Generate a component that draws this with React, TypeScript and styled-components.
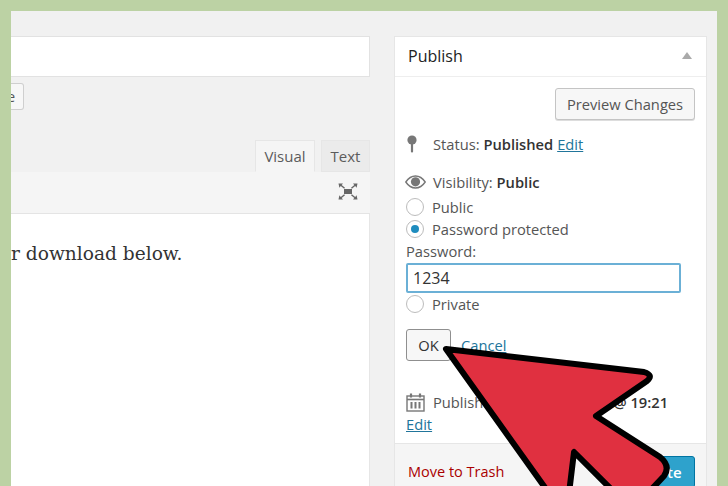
import styled, { createGlobalStyle } from 'styled-components';

const GlobalStyle = createGlobalStyle`
  html, body { margin: 0; padding: 0; overflow: hidden; }
  body { font-family: "Open Sans", "Liberation Sans", sans-serif; }
`;

const Frame = styled.div`
  position: relative;
  width: 728px;
  height: 486px;
  box-sizing: border-box;
  padding: 11px 11px 0;
  background: #bcd2a4;
  overflow: hidden;
`;

const Admin = styled.div`
  display: flex;
  gap: 24px;
  height: 475px;
  padding: 25px 10px 0 0;
  box-sizing: border-box;
  background: #f1f1f1;
  overflow: hidden;
`;

const Editor = styled.div`
  display: flex;
  flex-direction: column;
  width: 359px;
  flex: none;
  overflow: hidden;
`;

const TitleInput = styled.div`
  box-sizing: border-box;
  height: 41px;
  flex: none;
  background: #fff;
  border: 1px solid #e2e2e2;
  border-left: none;
`;

const SlugButton = styled.div`
  align-self: flex-start;
  box-sizing: border-box;
  width: 13px;
  height: 27px;
  margin-top: 6px;
  display: flex;
  align-items: center;
  justify-content: flex-end;
  overflow: hidden;
  padding-right: 8px;
  background: #f7f7f7;
  border: 1px solid #cfcfcf;
  border-left: none;
  border-radius: 0 3px 3px 0;
  font-size: 14px;
  color: #555;
`;

const Tabs = styled.div`
  display: flex;
  justify-content: flex-end;
  gap: 6px;
  margin-top: 30px;
  height: 32px;
  flex: none;
`;

const Tab = styled.div<{ $active?: boolean }>`
  box-sizing: border-box;
  display: flex;
  align-items: center;
  justify-content: center;
  width: ${(p) => (p.$active ? '60px' : '49px')};
  height: 32px;
  font-size: 15px;
  color: #5b5b5b;
  background: ${(p) => (p.$active ? '#f5f5f5' : '#ebebeb')};
  border: 1px solid #e6e6e6;
  border-bottom: ${(p) => (p.$active ? '1px solid #f5f5f5' : '1px solid #e6e6e6')};
`;

const Toolbar = styled.div`
  box-sizing: border-box;
  height: 42px;
  flex: none;
  display: flex;
  align-items: center;
  justify-content: flex-end;
  padding: 0 12px 2px 0;
  background: #f5f5f5;
  border-bottom: 1px solid #e4e4e4;
`;

const Content = styled.div`
  flex: 1;
  padding-top: 26px;
  background: #fff;
  border-right: 1px solid #e6e6e6;
`;

const BodyText = styled.p`
  margin: 0;
  font-family: "DejaVu Serif", serif;
  font-size: 18.6px;
  line-height: 28px;
  color: #333;
`;

const Box = styled.aside`
  width: 313px;
  flex: none;
  align-self: stretch;
  display: flex;
  flex-direction: column;
  background: #fff;
  border: 1px solid #e6e6e6;
  border-bottom: none;
  box-sizing: border-box;
`;

const BoxHeader = styled.div`
  box-sizing: border-box;
  height: 40px;
  flex: none;
  display: flex;
  align-items: center;
  justify-content: space-between;
  padding: 0 14px 2px 13px;
  border-bottom: 1px solid #eeeeee;
  font-size: 16px;
  font-weight: 500;
  color: #222;
`;

const Caret = styled.span`
  width: 0;
  height: 0;
  border-left: 5px solid transparent;
  border-right: 5px solid transparent;
  border-bottom: 7px solid #aaa;
`;

const BoxBody = styled.div`
  flex: 1;
  display: flex;
  flex-direction: column;
  padding: 0 11px;
  color: #555;
  font-size: 14.7px;
`;

const PreviewButton = styled.div`
  align-self: flex-end;
  box-sizing: border-box;
  width: 140px;
  height: 32px;
  margin-top: 11px;
  display: flex;
  align-items: center;
  justify-content: center;
  background: #f7f7f7;
  border: 1px solid #c4c4c4;
  border-radius: 3px;
  box-shadow: 0 1px 0 #ddd;
  color: #555;
`;

const InfoRow = styled.div<{ $top: number }>`
  display: flex;
  align-items: center;
  height: 22px;
  margin-top: ${(p) => p.$top}px;
  white-space: nowrap;
`;

const IconSlot = styled.span`
  width: 27px;
  flex: none;
  display: flex;
  align-items: center;
  justify-content: flex-start;
`;

const EyeSlot = styled(IconSlot)`
  margin-left: -1px;
  width: 28px;
`;

const Strong = styled.b`
  font-weight: 600;
  color: #333;
`;

const TextLink = styled.a`
  color: #21759b;
  text-decoration: underline;
`;

const LinkGap = styled(TextLink)`
  margin-left: 4px;
`;

const RadioRow = styled.div<{ $top?: number }>`
  display: flex;
  align-items: center;
  gap: 8px;
  height: 22px;
  margin-top: ${(p) => p.$top ?? 0}px;
  white-space: nowrap;
`;

const Radio = styled.span<{ $checked?: boolean }>`
  box-sizing: border-box;
  width: 18px;
  height: 18px;
  flex: none;
  border: 1px solid #bcbcbc;
  border-radius: 50%;
  background: #fff;
  display: flex;
  align-items: center;
  justify-content: center;
  &::after {
    content: '';
    width: 8px;
    height: 8px;
    border-radius: 50%;
    background: ${(p) => (p.$checked ? '#1e8cbe' : 'transparent')};
  }
`;

const PasswordLabel = styled.div`
  height: 22px;
  line-height: 22px;
`;

const PasswordInput = styled.div`
  box-sizing: border-box;
  width: 275px;
  height: 30px;
  margin-top: 1px;
  display: flex;
  align-items: center;
  padding-left: 5px;
  background: #fff;
  border: 2px solid #6bb0d6;
  border-radius: 2px;
  color: #333;
  font-size: 16px;
`;

const OkRow = styled.div`
  display: flex;
  align-items: center;
  gap: 10px;
  margin-top: 14px;
`;

const OkButton = styled.div`
  box-sizing: border-box;
  width: 45px;
  height: 32px;
  display: flex;
  align-items: center;
  justify-content: center;
  background: #f7f7f7;
  border: 1px solid #8f8f8f;
  border-radius: 3px;
  color: #333;
`;

const Footer = styled.div`
  box-sizing: border-box;
  flex: none;
  height: 44px;
  margin-top: 8px;
  display: flex;
  justify-content: space-between;
  align-items: flex-start;
  padding: 12px 11px 0 13px;
  background: #f5f5f5;
  border-top: 1px solid #e6e6e6;
`;

const TrashLink = styled.a`
  color: #a00;
  font-size: 14.5px;
  line-height: 32px;
`;

const UpdateButton = styled.div`
  box-sizing: border-box;
  width: 80px;
  height: 32px;
  display: flex;
  align-items: center;
  justify-content: center;
  background: #2ea2cc;
  border: 1px solid #0074a2;
  border-radius: 3px;
  color: #fff;
  font-size: 15px;
  font-weight: 600;
`;

const ArrowOverlay = styled.svg`
  position: absolute;
  left: 0;
  top: 0;
  pointer-events: none;
`;

function FullscreenIcon() {
  return (
    <svg width="20" height="17" viewBox="0 0 20 17" fill="#666">
      <rect x="6" y="6" width="8" height="5" />
      <path d="M0.5 0.5h4.5l-1.3 1.6 3.3 2.6-0.9 1-3.3-2.6-1.4 1.7zM19.5 0.5h-4.5l1.3 1.6-3.3 2.6 0.9 1 3.3-2.6 1.4 1.7zM0.5 16.5h4.5l-1.3-1.6 3.3-2.6-0.9-1-3.3 2.6-1.4-1.7zM19.5 16.5h-4.5l1.3-1.6-3.3-2.6 0.9-1 3.3 2.6 1.4-1.7z" />
    </svg>
  );
}

function PinIcon() {
  return (
    <svg width="12" height="18" viewBox="0 0 12 18" fill="#777">
      <circle cx="6" cy="5" r="4.6" />
      <rect x="4.9" y="8" width="2.2" height="9.6" rx="1" />
    </svg>
  );
}

function EyeIcon() {
  return (
    <svg width="21" height="14" viewBox="0 0 21 14">
      <path d="M0.8 7C3.5 3 6.8 1 10.5 1s7 2 9.7 6c-2.7 4-6 6-9.7 6S3.500 11 .8 7z" fill="none" stroke="#777" strokeWidth="1.4" />
      <circle cx="10.500" cy="6.800" r="4.600" fill="#777" />
    </svg>
  );
}

function CalendarIcon() {
  return (
    <svg width="19" height="19" viewBox="0 0 19 19" fill="none" stroke="#777">
      <rect x="1" y="3" width="17" height="15" strokeWidth="1.400" />
      <path d="M1 6.500h17" strokeWidth="1.600" />
      <path d="M5 0.500v4M14 0.500v4" strokeWidth="2.200" />
      <path d="M5.500 9v6.500M9.500 9v6.500M13.500 9v6.500" strokeWidth="2" />
    </svg>
  );
}

export default function App() {
  return (
    <>
      <GlobalStyle />
      <Frame>
        <Admin>
          <Editor>
            <TitleInput />
            <SlugButton>e</SlugButton>
            <Tabs>
              <Tab $active>Visual</Tab>
              <Tab>Text</Tab>
            </Tabs>
            <Toolbar>
              <FullscreenIcon />
            </Toolbar>
            <Content>
              <BodyText>r download below.</BodyText>
            </Content>
          </Editor>
          <Box>
            <BoxHeader>
              Publish
              <Caret />
            </BoxHeader>
            <BoxBody>
              <PreviewButton>Preview Changes</PreviewButton>
              <InfoRow $top={13}>
                <IconSlot>
                  <PinIcon />
                </IconSlot>
                Status:&nbsp;<Strong>Published</Strong>
                <LinkGap>Edit</LinkGap>
              </InfoRow>
              <InfoRow $top={16}>
                <EyeSlot>
                  <EyeIcon />
                </EyeSlot>
                Visibility:&nbsp;<Strong>Public</Strong>
              </InfoRow>
              <RadioRow $top={3}>
                <Radio />
                Public
              </RadioRow>
              <RadioRow>
                <Radio $checked />
                Password protected
              </RadioRow>
              <PasswordLabel>Password:</PasswordLabel>
              <PasswordInput>1234</PasswordInput>
              <RadioRow>
                <Radio />
                Private
              </RadioRow>
              <OkRow>
                <OkButton>OK</OkButton>
                <TextLink>Cancel</TextLink>
              </OkRow>
              <InfoRow $top={30}>
                <IconSlot>
                  <CalendarIcon />
                </IconSlot>
                Published on:&nbsp;<Strong>Jul 15, 2014 @ 19:21</Strong>
              </InfoRow>
              <InfoRow $top={0}>
                <TextLink>Edit</TextLink>
              </InfoRow>
            </BoxBody>
            <Footer>
              <TrashLink>Move to Trash</TrashLink>
              <UpdateButton>Update</UpdateButton>
            </Footer>
          </Box>
        </Admin>
        <ArrowOverlay width="728" height="486" viewBox="0 0 728 486">
          <path
            d="M446 349L644 372Q654 375 647 381L596 416L660 457Q671 466 664 476L632 510L574 452L567 510L561 510Z"
            fill="#e03040"
            stroke="#000"
            strokeWidth="6"
            strokeLinejoin="round"
          />
        </ArrowOverlay>
      </Frame>
    </>
  );
}
